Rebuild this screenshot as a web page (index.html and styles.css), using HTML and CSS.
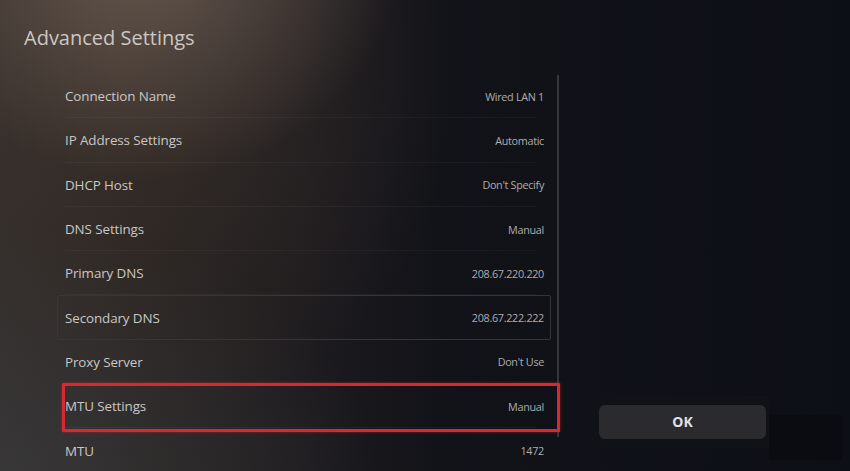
FILE: index.html
```html
<!DOCTYPE html>
<html lang="en">
	<head>
		<title>Advanced Settings</title>
		<meta charset="utf-8">
		<link rel="stylesheet" href="styles.css">
	</head>
	<body>
		<h1>Advanced Settings</h1>
		<div class='main'>
			<div class='lst'>
				<div class='row'><span class='lbl'>Connection Name</span><span class='val'>Wired LAN 1</span></div>
				<div class='row'><span class='lbl'>IP Address Settings</span><span class='val'>Automatic</span></div>
				<div class='row'><span class='lbl'>DHCP Host</span><span class='val'>Don't Specify</span></div>
				<div class='row'><span class='lbl'>DNS Settings</span><span class='val'>Manual</span></div>
				<div class='row'><span class='lbl'>Primary DNS</span><span class='val'>208.67.220.220</span></div>
				<div class='row focus'><span class='lbl'>Secondary DNS</span><span class='val'>208.67.222.222</span></div>
				<div class='row'><span class='lbl'>Proxy Server</span><span class='val'>Don't Use</span></div>
				<div class='row mark'><span class='lbl'>MTU Settings</span><span class='val'>Manual</span></div>
				<div class='row last'><span class='lbl'>MTU</span><span class='val'>1472</span></div>
			</div>
			<div class='scroll'></div>
			<div class='side'>
				<div class='okpanel'>
					<div class='ok'>OK</div>
				</div>
				<div class='shade'></div>
			</div>
		</div>
	</body>
</html>
```

FILE: styles.css
```css
html, body {
	margin: 0;
	width: 850px;
	height: 471px;
	overflow: hidden;
}
body {
	font-family: 'Open Sans', 'Noto Sans', sans-serif;
	color: #cfccc9;
	background-color: #0e1018;
	background-image:
		radial-gradient(ellipse 260px 240px at 145px -60px, rgba(125,108,96,0.7), rgba(125,108,96,0) 100%),
		radial-gradient(ellipse 340px 380px at 120px 60px, rgba(70,56,48,0.55), rgba(70,56,48,0) 100%),
		radial-gradient(ellipse 380px 260px at 0 480px, rgba(60,60,62,0.7), rgba(60,60,62,0) 100%),
		linear-gradient(to right, #302c2a 0, #262220 140px, #1d1b1e 300px, #121319 440px, #0d0f17 850px);
}
h1 {
	margin: 0;
	padding: 24px 0 0 24px;
	font-size: 20px;
	font-weight: 400;
	line-height: 28px;
	color: #cbc7c3;
}
.main {
	display: flex;
	margin-top: 22px;
}
.lst {
	margin-left: 57px;
	width: 494px;
}
.row {
	position: relative;
	display: flex;
	align-items: center;
	justify-content: space-between;
	box-sizing: border-box;
	height: 44.3px;
	padding: 0 7px 0 8px;
}
/* thin divider between rows */
.row::before {
	content: '';
	position: absolute;
	left: 8px;
	right: 14px;
	bottom: 0;
	height: 1px;
	background: rgba(255,255,255,0.04);
}
.row.last::before {
	display: none;
}
.lbl {
	font-size: 13.4px;
	letter-spacing: -0.1px;
	color: #cac7c4;
}
.val {
	font-size: 10.8px;
	color: #aeacab;
	letter-spacing: -0.3px;
}
.focus {
	border: 1px solid #36363a;
	border-radius: 2px;
	padding: 0 6px 0 7px;
}
.focus::before {
	display: none;
}
/* red frame round the MTU row */
.mark::after {
	content: '';
	position: absolute;
	left: 5px;
	right: -9px;
	top: -1px;
	bottom: -4px;
	border: 3px solid #d52a31;
	border-radius: 1px;
	box-shadow: 0 0 3px rgba(213,42,49,0.6);
}
.scroll {
	width: 2px;
	height: 362px;
	margin: 1px 0 0 6px;
	background: #36373d;
}
.side {
	display: flex;
	align-items: flex-start;
	margin: 322px 0 0 32px;
}
.okpanel {
	width: 178px;
	padding: 9px 3px 9px 8px;
	box-sizing: border-box;
	background: #111217;
}
.ok {
	height: 34px;
	line-height: 34px;
	border-radius: 6px;
	background: #2a2a2f;
	text-align: center;
	font-size: 14px;
	font-weight: 700;
	color: #e2e2e4;
}
.shade {
	width: 73px;
	height: 45px;
	margin-top: 19px;
	background: #0b0c11;
}
```
